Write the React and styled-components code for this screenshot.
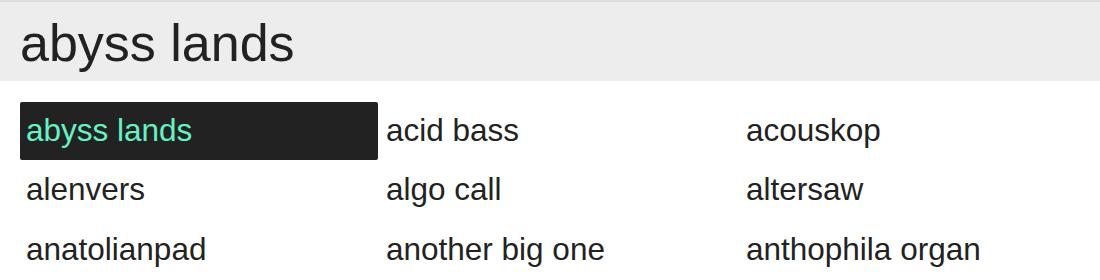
import styled, { createGlobalStyle } from 'styled-components';

const GlobalStyle = createGlobalStyle`
    body {
        margin: 0;
        background-color: #FFFFFF;
        font-family: "Liberation Sans", Arial, sans-serif;
        color: #222222;
    }
`;

const patches = [
    'abyss lands', 'acid bass', 'acouskop',
    'alenvers', 'algo call', 'altersaw',
    'anatolianpad', 'another big one', 'anthophila organ',
];

export default function App() {

    const selected = 'abyss lands';

    return (
        <>
            <GlobalStyle />
            <Header>
                <h1>{selected}</h1>
            </Header>
            <PatchList>
                {patches.map(name =>
                    <PatchItem key={name} active={name === selected}>
                        {name}
                    </PatchItem>
                )}
            </PatchList>
        </>
    )
};

const Header = styled.div`
    border-top: 2px solid #DCDCDC;
    background-color: #EDEDED;
    height: 79px;
    display: flex;
    align-items: center;
    padding: 0 20px;
    h1 {
        margin: 0;
        font-size: 52px;
        font-weight: normal;
        line-height: 1;
        color: #222222;
        padding-top: 2px;
    }
`;

const PatchList = styled.div`
    display: grid;
    grid-template-columns: repeat(3, 358px);
    grid-auto-rows: 58px;
    column-gap: 2px;
    row-gap: 1.5px;
    padding: 21px 20px 0 20px;
`;

const PatchItem = styled.div`
    display: flex;
    align-items: center;
    padding: 0 6px 2px 6px;
    font-size: 31.5px;
    border-radius: 2px;
    background-color: ${props => props.active ? "#222222" : "transparent"};
    color: ${props => props.active ? "#66F2C4" : "#222222"};
`;
